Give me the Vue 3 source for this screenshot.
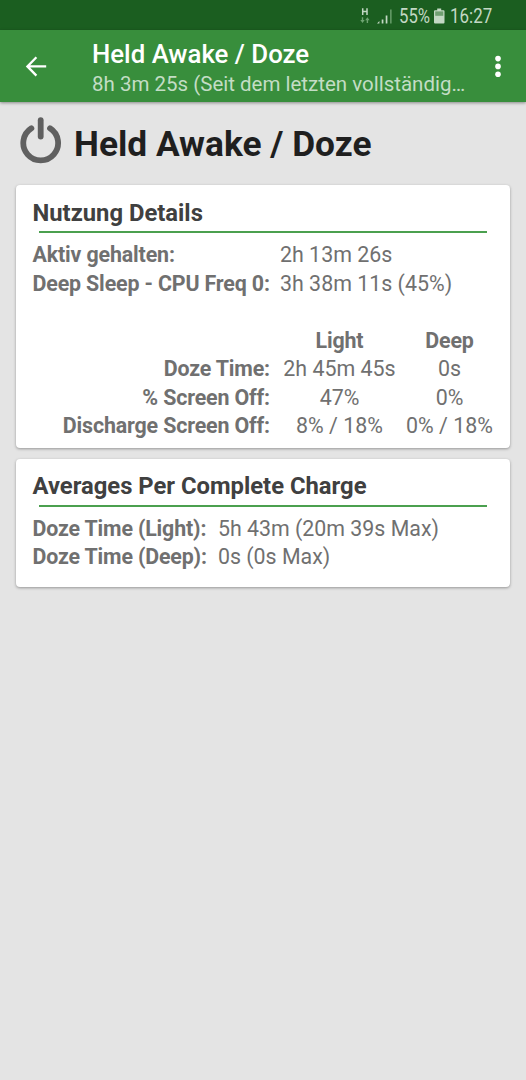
<script setup>
const usage = [
  { label: "Aktiv gehalten:", value: "2h 13m 26s" },
  { label: "Deep Sleep - CPU Freq 0:", value: "3h 38m 11s (45%)" },
];

const doze = [
  { label: "Doze Time:", light: "2h 45m 45s", deep: "0s" },
  { label: "% Screen Off:", light: "47%", deep: "0%" },
  { label: "Discharge Screen Off:", light: "8% / 18%", deep: "0% / 18%" },
];

const averages = [
  { label: "Doze Time (Light):", value: "5h 43m (20m 39s Max)" },
  { label: "Doze Time (Deep):", value: "0s (0s Max)" },
];
</script>

<template>
  <div class="screen">
    <div class="status-bar">
      <svg class="data-icon" width="12" height="18" viewBox="0 0 12 18">
        <path d="M2.700 1.300v6.700M7 1.300v6.700M2.700 4.600H7" stroke="#c3d8c4" stroke-width="1.500" fill="none" />
        <path d="M1.800 10.300h1.400v2.700h1.500L2.500 15.900.3 13h1.500zM6.700 15.900v-2.700H5.200l2.200-2.900 2.200 2.900H8.100v2.700z" fill="#6fa472" />
      </svg>
      <svg class="signal-icon" width="16" height="17" viewBox="0 0 16 17">
        <path d="M0 15.500L2.400 13v2.500zM4.700 11.500h1.700v4H4.700zM8.700 7.500h1.700v8H8.700z" fill="#c3d8c4" />
        <path d="M13 1.500h1.700v14H13z" fill="#5f9762" />
      </svg>
      <span class="percent">55%</span>
      <svg class="battery-icon" width="11" height="17" viewBox="0 0 11 17">
        <path d="M3.200 .5h4v1.700h2.300a1 1 0 0 1 1 1v11.300a1 1 0 0 1-1 1H1a1 1 0 0 1-1-1V3.200a1 1 0 0 1 1-1h2.200z" fill="#c3d8c4" />
        <path d="M1.200 3.400h8.100v4.400H1.200z" fill="#6f9f71" />
      </svg>
      <span class="clock">16:27</span>
    </div>

    <header class="toolbar">
      <svg class="back" width="24" height="24" viewBox="0 0 24 24">
        <path d="M22.200 12.400H4M12.400 3.200L3.400 12.400l9 9.200" stroke="#fff" stroke-width="2.300" fill="none" />
      </svg>
      <div class="toolbar-text">
        <div class="toolbar-title">Held Awake / Doze</div>
        <div class="toolbar-subtitle">8h 3m 25s (Seit dem letzten vollständig…</div>
      </div>
      <svg class="more" width="8" height="24" viewBox="0 0 8 24">
        <circle cx="4" cy="4.600" r="2.800" fill="#fff" />
        <circle cx="4" cy="12.400" r="2.800" fill="#fff" />
        <circle cx="4" cy="20.200" r="2.800" fill="#fff" />
      </svg>
    </header>

    <main>
      <div class="heading">
        <svg class="power" width="42" height="48" viewBox="0 0 42 48">
          <path d="M11.400 12.300A17.400 17.400 0 1 0 30 12.300" stroke="#606060" stroke-width="5.800" stroke-linecap="round" fill="none" />
          <path d="M20.700 4.200v16.400" stroke="#606060" stroke-width="5.800" stroke-linecap="round" />
        </svg>
        <h1>Held Awake / Doze</h1>
      </div>

      <section class="card usage-card">
        <h2>Nutzung Details</h2>
        <hr />
        <div class="grid usage">
          <template v-for="row in usage" :key="row.label">
            <b>{{ row.label }}</b>
            <span class="wide">{{ row.value }}</span>
          </template>
        </div>
        <div class="grid doze">
          <b></b>
          <b>Light</b>
          <b>Deep</b>
          <template v-for="row in doze" :key="row.label">
            <b class="label">{{ row.label }}</b>
            <span>{{ row.light }}</span>
            <span>{{ row.deep }}</span>
          </template>
        </div>
      </section>

      <section class="card averages-card">
        <h2>Averages Per Complete Charge</h2>
        <hr />
        <div class="averages">
          <template v-for="row in averages" :key="row.label">
            <b>{{ row.label }}</b>
            <span>{{ row.value }}</span>
          </template>
        </div>
      </section>
    </main>
  </div>
</template>

<style>
body {
  background: #e4e4e4;
}
</style>

<style scoped>
.screen {
  min-height: 1080px;
  background: #e4e4e4;
  font-family: Roboto, "Liberation Sans", sans-serif;
  color: #707070;
  white-space: nowrap;
}

.status-bar {
  display: flex;
  align-items: center;
  height: 30px;
  padding-left: 360px;
  padding-top: 2px;
  box-sizing: border-box;
  background: #1b5e20;
  color: #c3d8c4;
  font-size: 19.7px;
}

.signal-icon {
  margin-left: 5px;
}

.percent {
  width: 30px;
  margin-left: 6px;
  transform: scaleX(0.85);
  transform-origin: left;
}

.battery-icon {
  margin-left: 5px;
}

.clock {
  margin-left: 5px;
  transform: scaleX(0.86);
  transform-origin: left;
}

.toolbar {
  display: flex;
  align-items: center;
  height: 72px;
  padding: 0 24px;
  box-sizing: border-box;
  background: #388e3c;
  box-shadow: 0 1px 3px rgba(0, 0, 0, 0.4);
}

.toolbar-text {
  flex: 1;
  margin-left: 44px;
  padding-top: 4px;
}

.toolbar-title {
  color: #fff;
  font-size: 25.8px;
  font-weight: 500;
  line-height: 32px;
}

.toolbar-subtitle {
  color: #c3ddc5;
  font-size: 20.5px;
  line-height: 29px;
}

main {
  padding: 0 16px;
}

.heading {
  display: flex;
  height: 83px;
  padding: 14px 0 0 4px;
  box-sizing: border-box;
}

h1 {
  margin: 7px 0 0 12px;
  color: #1f1f1f;
  font-size: 35.3px;
  font-weight: 700;
  line-height: 42px;
}

.card {
  padding: 14px 15.5px 0 16.5px;
  margin-bottom: 11px;
  box-sizing: border-box;
  border-radius: 4px;
  background: #fff;
  box-shadow: 0 1px 3px rgba(0, 0, 0, 0.35);
}

.usage-card {
  height: 263px;
}

.averages-card {
  height: 128px;
  padding-top: 13px;
}

h2 {
  margin: 0;
  color: #404040;
  font-size: 23.8px;
  font-weight: 700;
  line-height: 28px;
}

hr {
  height: 2px;
  margin: 4px 7.5px 8px 6.5px;
  border: 0;
  background: #4ba04f;
}

.averages-card hr {
  margin-top: 5px;
  margin-bottom: 7.5px;
}

b {
  letter-spacing: -0.15px;
}

.grid {
  display: grid;
  grid-template-columns: 247.5px 119px 101px;
  font-size: 21.4px;
  line-height: 28.5px;
}

.wide {
  grid-column: span 2;
}

.doze {
  margin-top: 28.5px;
  text-align: center;
}

.doze .label {
  padding-right: 10px;
  text-align: right;
}

.averages {
  display: grid;
  grid-template-columns: 185.5px 1fr;
  font-size: 21.35px;
  line-height: 28.5px;
}
</style>
